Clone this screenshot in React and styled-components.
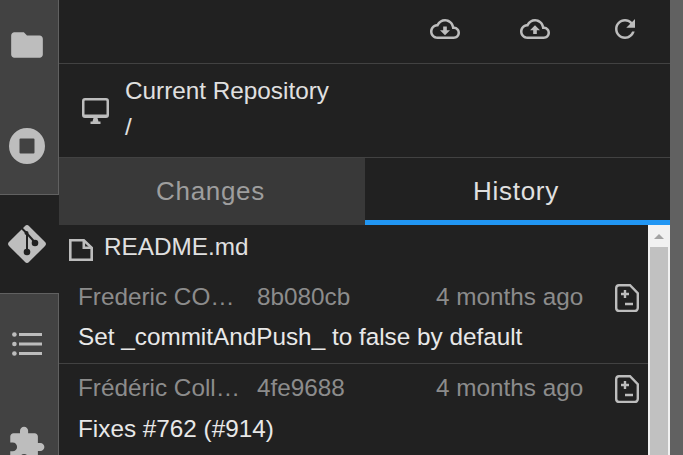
import React from 'react';
import styled, { createGlobalStyle } from 'styled-components';

const GlobalStyle = createGlobalStyle`
  html, body {
    margin: 0;
    height: 100%;
    overflow: hidden;
    background: #616161;
    font-family: "Liberation Sans", Arial, sans-serif;
  }
`;

const Shell = styled.div`
  display: flex;
  width: 683px;
  height: 455px;
  overflow: hidden;
`;

const Sidebar = styled.nav`
  flex: none;
  width: 59px;
  height: 455px;
  background: #424242;
  overflow: hidden;
`;

const SideList = styled.div`
  display: flex;
  flex-direction: column;
  margin-top: -8px;
`;

const SideTab = styled.div`
  box-sizing: border-box;
  flex: none;
  height: ${(p) => p.$height}px;
  display: flex;
  align-items: center;
  justify-content: center;
  padding-right: 5px;
  color: #bdbdbd;
  background: ${(p) => (p.$active ? '#212121' : '#424242')};
  border-right: ${(p) => (p.$active ? 'none' : '1px solid #616161')};
  border-top: ${(p) => (p.$active ? '1px solid #616161' : 'none')};
  border-bottom: ${(p) => (p.$active ? '1px solid #616161' : 'none')};
`;

const Main = styled.main`
  flex: none;
  width: 611px;
  height: 455px;
  background: #212121;
  display: flex;
  flex-direction: column;
  overflow: hidden;
`;

const Toolbar = styled.div`
  flex: none;
  box-sizing: border-box;
  height: 64px;
  border-bottom: 1px solid #424242;
  display: flex;
  align-items: center;
  justify-content: flex-end;
  gap: 60px;
  padding: 0 30px 6px 0;
  color: #bdbdbd;
`;

const ToolIcon = styled.svg`
  width: 30px;
  height: 30px;
  fill: currentColor;
  display: block;
`;

const Repo = styled.div`
  flex: none;
  box-sizing: border-box;
  height: 93px;
  display: flex;
  align-items: center;
  padding-left: 23px;
  gap: 16px;
  color: #bdbdbd;
`;

const RepoText = styled.div`
  font-size: 24.3px;
  line-height: 36px;
  color: #e0e0e0;
  padding-bottom: 4px;
`;

const Tabs = styled.div`
  flex: none;
  display: flex;
  height: 68px;
`;

const Tab = styled.div`
  box-sizing: border-box;
  width: ${(p) => p.$width}px;
  height: 68px;
  display: flex;
  align-items: center;
  justify-content: center;
  padding: 4px 3px 0 0;
  font-size: 26px;
  letter-spacing: 0.7px;
  color: ${(p) => (p.$active ? '#e0e0e0' : '#9e9e9e')};
  background: ${(p) => (p.$active ? '#212121' : '#393939')};
  border-top: 1px solid #424242;
  border-bottom: 5px solid ${(p) => (p.$active ? '#2196f3' : '#393939')};
`;

const Body = styled.div`
  flex: 1;
  display: flex;
  min-height: 0;
`;

const Content = styled.div`
  flex: 1;
  min-width: 0;
`;

const FileRow = styled.div`
  box-sizing: border-box;
  height: 48px;
  display: flex;
  align-items: center;
  padding: 0 0 4px 10px;
  gap: 11px;
  font-size: 24.3px;
  color: #e0e0e0;
`;

const FileIcon = styled.svg`
  width: 24px;
  height: 22px;
  flex: none;
  fill: none;
  stroke: #bdbdbd;
  stroke-width: 2.600;
  margin-top: 6px;
`;

const Commit = styled.div`
  box-sizing: border-box;
  height: 91.3px;
  padding: 10px 0 0 19px;
  border-bottom: 1px solid #424242;
`;

const CommitMeta = styled.div`
  display: flex;
  align-items: center;
  height: 28px;
  font-size: 24.3px;
  color: #8c8c8c;
`;

const Author = styled.span`
  width: 179px;
  white-space: nowrap;
`;

const Sha = styled.span`
  width: 179px;
`;

const When = styled.span`
  width: 179px;
  white-space: nowrap;
`;

const DiffIcon = styled.svg`
  width: 24px;
  height: 28px;
  margin-top: 2px;
  fill: none;
  stroke: #bdbdbd;
  stroke-width: 2.400;
  flex: none;
`;

const Message = styled.div`
  margin-top: 12.3px;
  font-size: 24.3px;
  color: #e8e8e8;
  white-space: nowrap;
`;

const Scrollbar = styled.div`
  flex: none;
  width: 22px;
  background: #f1f1f1;
  display: flex;
  flex-direction: column;
  align-items: center;
`;

const ScrollArrow = styled.div`
  flex: none;
  height: 22px;
  width: 100%;
  position: relative;
  &::after {
    content: '';
    position: absolute;
    left: 6px;
    top: 9px;
    border-left: 5px solid transparent;
    border-right: 5px solid transparent;
    border-bottom: 5px solid #a3a3a3;
  }
`;

const ScrollThumb = styled.div`
  flex: 1;
  width: 18px;
  background: #c1c1c1;
`;

const CloudDown = () => (
  <ToolIcon viewBox="0 0 24 24">
    <path d="M19.35 10.04C18.67 6.59 15.64 4 12 4 9.11 4 6.6 5.64 5.35 8.04 2.34 8.36 0 10.91 0 14c0 3.31 2.69 6 6 6h13c2.76 0 5-2.24 5-5 0-2.64-2.05-4.78-4.65-4.96zM19 18H6c-2.21 0-4-1.79-4-4 0-2.05 1.53-3.76 3.56-3.97l1.07-.11.5-.95C8.08 7.14 9.94 6 12 6c2.62 0 4.88 1.86 5.39 4.43l.3 1.5 1.53.11c1.56.1 2.78 1.41 2.78 2.96 0 1.65-1.35 3-3 3zm-5.55-8h-2.9v3H8l4 4 4-4h-2.55z" />
  </ToolIcon>
);

const CloudUp = () => (
  <ToolIcon viewBox="0 0 24 24">
    <path d="M19.35 10.04C18.67 6.59 15.64 4 12 4 9.11 4 6.6 5.64 5.35 8.04 2.34 8.36 0 10.91 0 14c0 3.31 2.69 6 6 6h13c2.76 0 5-2.24 5-5 0-2.64-2.05-4.78-4.65-4.96zM19 18H6c-2.21 0-4-1.79-4-4 0-2.05 1.53-3.76 3.56-3.97l1.07-.11.5-.95C8.08 7.14 9.94 6 12 6c2.62 0 4.88 1.86 5.39 4.43l.3 1.5 1.53.11c1.56.1 2.78 1.41 2.78 2.96 0 1.65-1.35 3-3 3zM8 13h2.55v3h2.9v-3H16l-4-4z" />
  </ToolIcon>
);

const Refresh = () => (
  <ToolIcon viewBox="0 0 24 24">
    <path d="M17.65 6.35C16.2 4.9 14.21 4 12 4c-4.42 0-7.99 3.58-7.99 8s3.57 8 7.99 8c3.73 0 6.84-2.55 7.73-6h-2.08c-.82 2.33-3.04 4-5.65 4-3.31 0-6-2.69-6-6s2.69-6 6-6c1.66 0 3.14.69 4.22 1.78L13 11h7V4l-2.35 2.35z" />
  </ToolIcon>
);

const Diff = () => (
  <DiffIcon viewBox="0 0 24 28">
    <path d="M4 1.200h11l7.800 8v14.800a3 3 0 0 1-3 3H4a3 3 0 0 1-2.800-3V4a3 3 0 0 1 2.800-2.800z" />
    <path d="M6 10h8M10 6v8M10 20h8" />
  </DiffIcon>
);

const GitLogo = () => (
  <svg width="38" height="38" viewBox="0 0 38 38">
    <path
      fill="#bdbdbd"
      d="M16.800 1.200a3 3 0 0 1 4.400 0l15.600 15.600a3 3 0 0 1 0 4.400L21.200 36.800a3 3 0 0 1-4.400 0L1.200 21.200a3 3 0 0 1 0-4.400z"
    />
    <g stroke="#212121" strokeWidth="2" fill="none">
      <path d="M13 2.500l6 6v18" />
      <path d="M19 8.500l8 9" />
    </g>
    <circle cx="19" cy="27" r="3.300" fill="#212121" />
    <circle cx="27" cy="18" r="3.300" fill="#212121" />
    <circle cx="18.500" cy="8" r="2" fill="#212121" />
  </svg>
);

const commits = [
  { author: 'Frederic CO…', sha: '8b080cb', message: 'Set _commitAndPush_ to false by default' },
  { author: 'Frédéric Coll…', sha: '4fe9688', message: 'Fixes #762 (#914)' },
];

export default function App() {
  return (
    <>
      <GlobalStyle />
      <Shell>
        <Sidebar>
          <SideList>
            <SideTab $height={106}>
              <svg width="38" height="38" viewBox="0 0 24 24" fill="currentColor">
                <path d="M10 4H4c-1.100 0-2 .9-2 2v12c0 1.100.9 2 2 2h16c1.100 0 2-.9 2-2V8c0-1.100-.9-2-2-2h-8l-2-2z" />
              </svg>
            </SideTab>
            <SideTab $height={96}>
              <svg width="36" height="36" viewBox="0 0 36 36" fill="currentColor">
                <path
                  fillRule="evenodd"
                  d="M18 0a18 18 0 1 0 0 36a18 18 0 1 0 0-36zM11.500 10.500h13a1 1 0 0 1 1 1v13a1 1 0 0 1-1 1h-13a1 1 0 0 1-1-1v-13a1 1 0 0 1 1-1z"
                />
              </svg>
            </SideTab>
            <SideTab $active $height={100}>
              <GitLogo />
            </SideTab>
            <SideTab $height={100}>
              <svg width="30" height="24" viewBox="0 0 30 24" fill="currentColor">
                <circle cx="2.400" cy="2.500" r="2.300" />
                <circle cx="2.400" cy="12" r="2.300" />
                <circle cx="2.400" cy="21.500" r="2.300" />
                <rect x="7" y="1" width="23" height="3" />
                <rect x="7" y="10.500" width="23" height="3" />
                <rect x="7" y="20" width="23" height="3" />
              </svg>
            </SideTab>
            <SideTab $height={100}>
              <svg width="39" height="39" viewBox="0 0 24 24" fill="currentColor">
                <path d="M20.500 11H19V7c0-1.100-.9-2-2-2h-4V3.500C13 2.120 11.880 1 10.500 1S8 2.120 8 3.500V5H4c-1.100 0-1.990.9-1.990 2v3.800H3.500c1.490 0 2.700 1.210 2.700 2.700s-1.210 2.700-2.700 2.700H2V20c0 1.100.9 2 2 2h3.800v-1.500c0-1.490 1.210-2.700 2.700-2.700 1.490 0 2.700 1.210 2.700 2.700V22H17c1.100 0 2-.9 2-2v-4h1.500c1.380 0 2.500-1.120 2.500-2.500S21.880 11 20.500 11z" />
              </svg>
            </SideTab>
          </SideList>
        </Sidebar>
        <Main>
          <Toolbar>
            <CloudDown />
            <CloudUp />
            <Refresh />
          </Toolbar>
          <Repo>
            <svg width="27" height="26" viewBox="0 0 27 26" fill="currentColor">
              <path
                fillRule="evenodd"
                d="M3 0h21a3 3 0 0 1 3 3v14a3 3 0 0 1-3 3H3a3 3 0 0 1-3-3V3a3 3 0 0 1 3-3zM3 2.500a.5.5 0 0 0-.5.5v13.500h22V3a.5.5 0 0 0-.5-.5z"
              />
              <path d="M11.500 20h4l1 3.500h2V26h-10v-2.500h2z" />
            </svg>
            <RepoText>
              <div>Current Repository</div>
              <div>/</div>
            </RepoText>
          </Repo>
          <Tabs>
            <Tab $width={306}>Changes</Tab>
            <Tab $active $width={305}>History</Tab>
          </Tabs>
          <Body>
            <Content>
              <FileRow>
                <FileIcon viewBox="0 0 24 22">
                  <path d="M1.300 20.700V1.300h13.500l7.900 7.500v11.900z" />
                  <path d="M14.800 1.300v7.500h7.900" />
                </FileIcon>
                README.md
              </FileRow>
              {commits.map((c) => (
                <Commit key={c.sha}>
                  <CommitMeta>
                    <Author>{c.author}</Author>
                    <Sha>{c.sha}</Sha>
                    <When>4 months ago</When>
                    <Diff />
                  </CommitMeta>
                  <Message>{c.message}</Message>
                </Commit>
              ))}
            </Content>
            <Scrollbar>
              <ScrollArrow />
              <ScrollThumb />
            </Scrollbar>
          </Body>
        </Main>
      </Shell>
    </>
  );
}
